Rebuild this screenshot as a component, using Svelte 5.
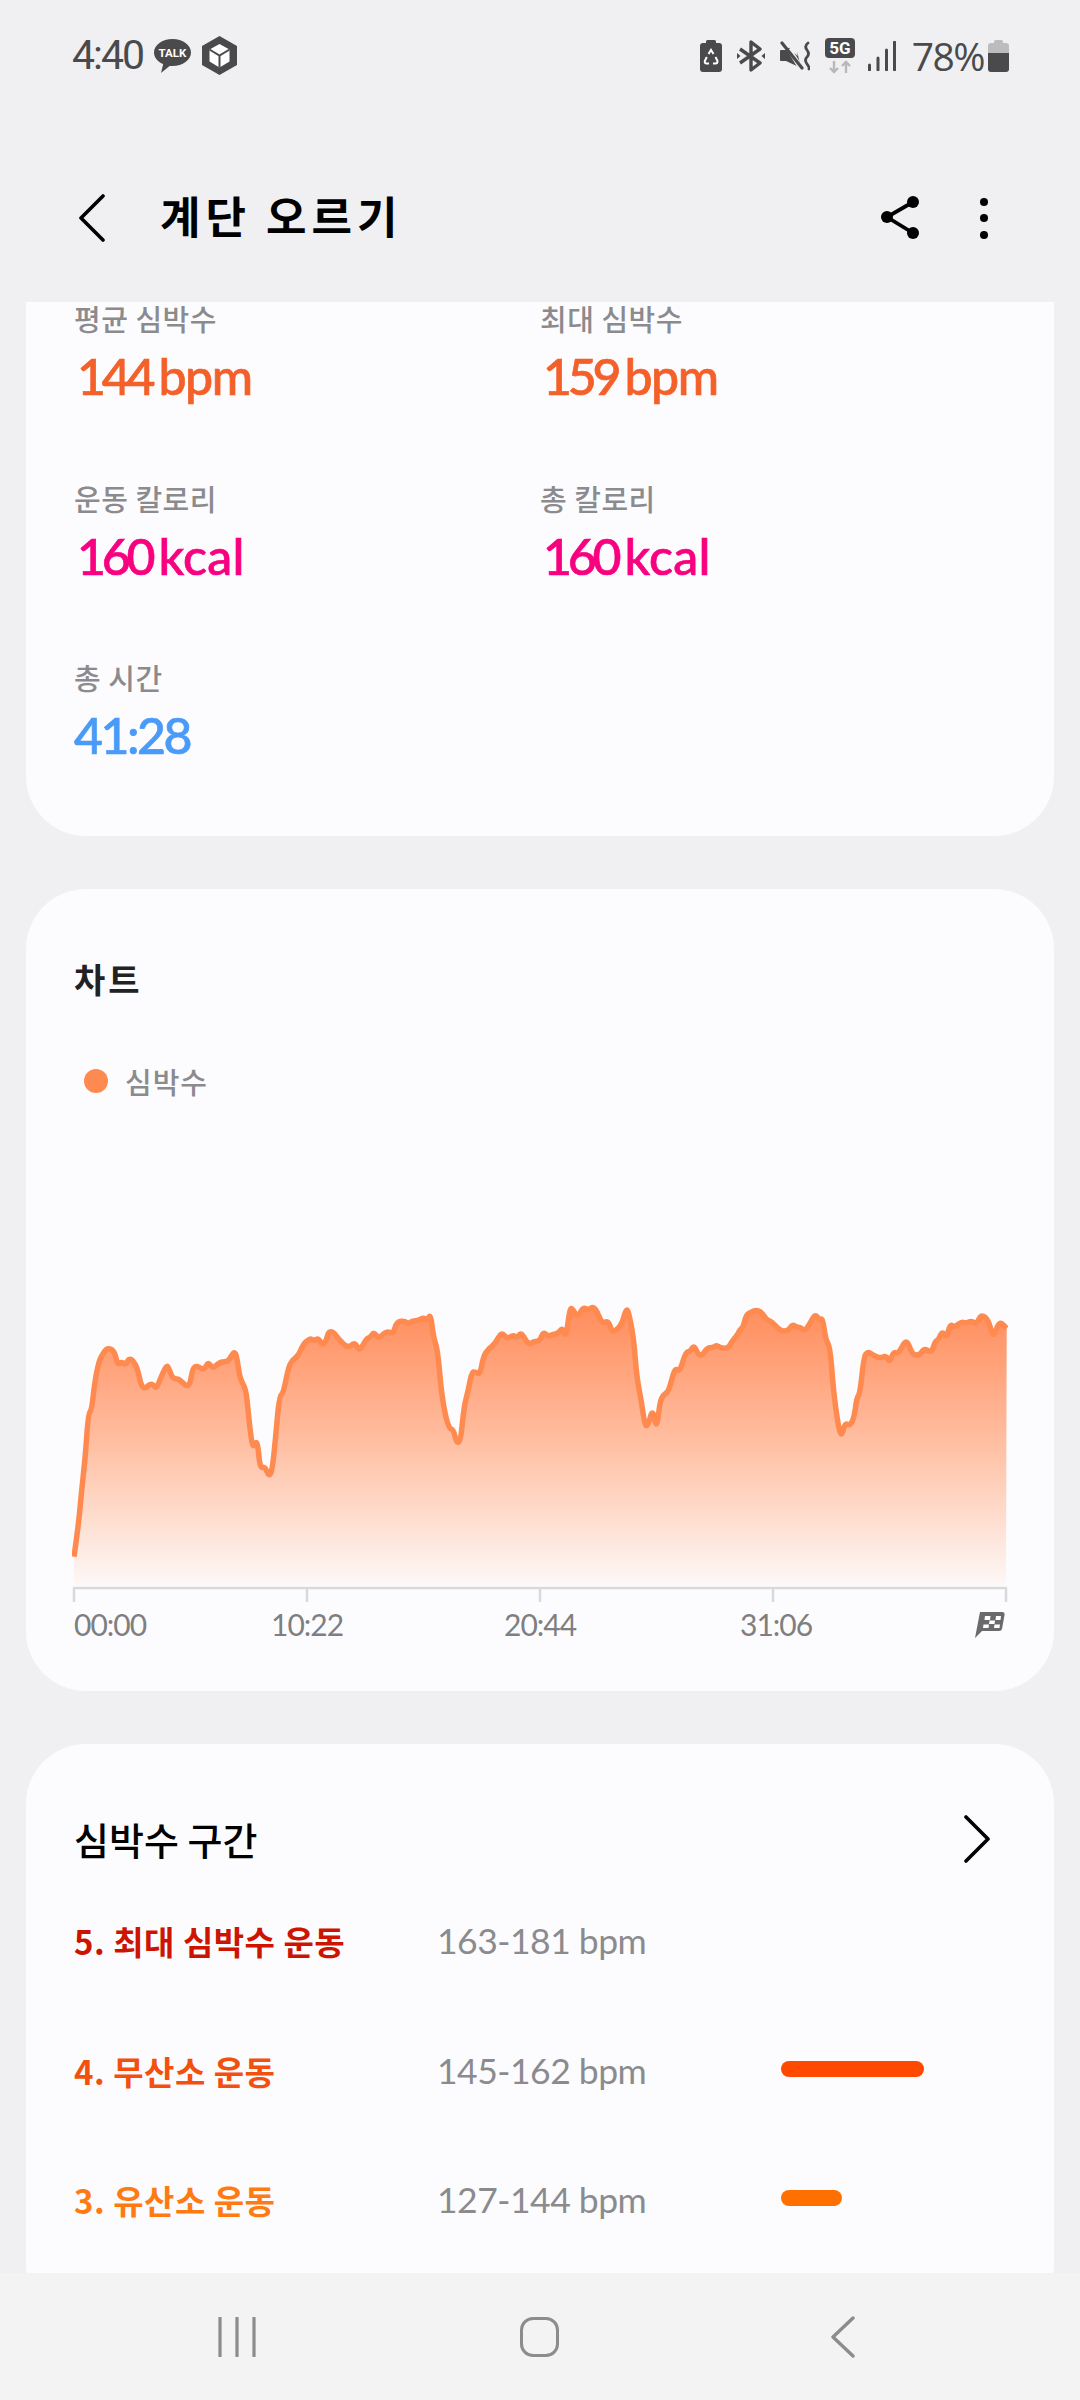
<script>
	const stats = [
		{ label: "평균 심박수", value: "144", unit: "bpm", tone: "heart" },
		{ label: "최대 심박수", value: "159", unit: "bpm", tone: "heart" },
		{ label: "운동 칼로리", value: "160", unit: "kcal", tone: "cal" },
		{ label: "총 칼로리", value: "160", unit: "kcal", tone: "cal" },
		{ label: "총 시간", value: "41:28", unit: "", tone: "time" },
	];

	const zones = [
		{ name: "5. 최대 심박수 운동", range: "163-181 bpm", color: "#cc1400", width: 0 },
		{ name: "4. 무산소 운동", range: "145-162 bpm", color: "#f2500f", width: 143 },
		{ name: "3. 유산소 운동", range: "127-144 bpm", color: "#ff7a12", width: 61 },
	];

	const barColors = ["#cc1400", "#ff4800", "#ff7000"];

	// traced from the recording, in px relative to the chart box
	const left = [102,860,115,770,125,660,135,570,145,430,155,420,165,330,178,270,190,250,200,235,215,237,225,250,233,285,245,275,257,285,267,265,280,272,292,295,303,345,313,357,335,338,348,357,360,330,378,287,385,290,395,320,405,327,417,327,438,348,450,345,458,295,470,287,485,297,495,295,505,275,518,297,540,275,565,275,575,255,585,245,592,270,597,310,605,335,618,360,625,430,635,520,642,530,652,510,660,595,675,590,687,620,697,600,707,500,718,378,730,370,745,295,755,272,775,258,790,222,810,205,822,212,835,205,847,225,858,215,865,185,880,185,895,207,925,235,945,215,958,245,980,205,990,203,1002,185,1015,207,1040,183,1060,192,1070,155,1095,153,1105,162,1118,152,1135,152,1150,143,1162,150,1172,132,1180,200,1193,240,1205,380,1225,475,1240,478,1250,520,1262,512,1272,410,1285,360,1295,307,1305,305,1320,315,1330,260,1345,237,1365,222,1385,185,1400,207,1420,195,1432,205,1443,185,1465,225,1480,215,1500,213];
	const right = [10,185,25,200,40,192,55,190,68,172,78,205,90,112,100,120,112,142,130,112,145,120,160,110,172,125,185,160,205,152,215,183,225,183,245,165,260,110,270,145,282,215,290,320,305,400,315,468,325,465,338,415,350,480,360,395,370,375,385,365,395,330,405,295,420,305,437,245,450,245,462,225,475,255,488,255,500,235,520,232,530,225,545,235,565,235,575,215,590,198,600,180,610,170,618,135,635,125,650,120,665,127,680,150,695,155,722,183,745,183,757,163,770,172,780,172,795,183,810,160,825,132,838,150,848,145,857,210,870,230,880,360,895,470,905,500,915,458,930,468,943,440,950,385,960,370,972,260,983,245,1000,255,1020,265,1038,257,1050,277,1060,245,1075,252,1095,213,1105,220,1118,255,1140,255,1152,235,1175,248,1185,215,1195,210,1207,183,1220,205,1230,162,1243,172,1265,155,1278,160,1295,152,1310,163,1323,132,1345,150,1357,195,1365,190,1378,153,1400,175];

	const points = [];
	for (let i = 0; i < left.length; i += 2) points.push([left[i] / 3 - 32, left[i + 1] / 3 - 10]);
	for (let i = 0; i < right.length; i += 2) points.push([right[i] / 3 + 468, right[i + 1] / 3 - 10]);

	function smooth(pts) {
		let d = `M${pts[0][0].toFixed(1)} ${pts[0][1].toFixed(1)}`;
		for (let i = 1; i < pts.length - 1; i++) {
			const mx = (pts[i][0] + pts[i + 1][0]) / 2;
			const my = (pts[i][1] + pts[i + 1][1]) / 2;
			d += ` Q${pts[i][0].toFixed(1)} ${pts[i][1].toFixed(1)} ${mx.toFixed(1)} ${my.toFixed(1)}`;
		}
		const last = pts[pts.length - 1];
		return d + ` L${last[0].toFixed(1)} ${last[1].toFixed(1)}`;
	}

	const linePath = smooth(points);
	const areaPath = `${linePath} L934 305 L2 305 Z`;
	const ticks = [2, 235, 468, 701, 934];
</script>

<div class="phone">
	<div class="status">
		<div class="status-left">
			<span class="clock">4:40</span>
			<svg class="talk" viewBox="0 0 37 34" width="37" height="34">
				<path d="M18.5 0C8.3 0 0 6 0 13.500C0 18.500 3.700 22.800 9.200 25.100L7 34L15.600 26.900C16.600 27 17.500 27 18.500 27C28.700 27 37 21 37 13.500S28.700 0 18.500 0Z" fill="#4a4a4c" />
				<text x="18.500" y="18" text-anchor="middle" class="talk-text">TALK</text>
			</svg>
			<svg class="cube" viewBox="0 0 35 39" width="35" height="39">
				<path d="M17.500 0L35 10V29L17.500 39L0 29V10Z" fill="#4a4a4c" />
				<path d="M17.500 8L27.500 13.500V25.500L17.500 31.500L7.500 25.500V13.500Z" fill="#fff" />
				<path d="M7.500 13.500L17.500 19.500L27.500 13.500M17.500 19.500V31.500" fill="none" stroke="#4a4a4c" stroke-width="2" />
			</svg>
		</div>
		<div class="status-right">
			<svg viewBox="0 0 22 32" width="22" height="32">
				<path d="M6 3V1.500Q6 0 7.500 0H14.500Q16 0 16 1.500V3H19Q22 3 22 6V29Q22 32 19 32H3Q0 32 0 29V6Q0 3 3 3Z" fill="#4a4a4c" />
				<path d="M8.500 14L11 10L13.500 14M15.500 17L17.500 21Q17.500 23.500 15.500 23.500H13M9 23.500H6.500Q4.500 23.500 4.800 21L6.800 17" fill="none" stroke="#fff" stroke-width="2" />
			</svg>
			<svg viewBox="0 0 28 32" width="28" height="32">
				<path d="M3 9L23 23L14 30V2L23 9L3 23" fill="none" stroke="#4a4a4c" stroke-width="3.400" stroke-linejoin="round" />
				<path d="M0 13L3.500 16L0 19ZM28 13L24.500 16L28 19Z" fill="#4a4a4c" />
			</svg>
			<svg viewBox="0 0 30 30" width="30" height="30">
				<path d="M0 10Q0 9 1 9H6L15 2L21 27L6 20H1Q0 20 0 19Z" fill="#4a4a4c" />
				<path d="M15 2V9L4 -2ZM22 29L9 8" fill="none" stroke="#f0f0f3" stroke-width="5" />
				<path d="M2 2L22 27" stroke="#4a4a4c" stroke-width="3.200" stroke-linecap="round" />
				<path d="M28 2Q24 5 27 9T27 16T27 23T29 28" fill="none" stroke="#4a4a4c" stroke-width="2.800" stroke-linecap="round" />
			</svg>
			<svg class="fiveg" viewBox="0 0 30 36" width="30" height="36">
				<rect width="30" height="20" rx="4" fill="#4a4a4c" />
				<text x="15" y="16" text-anchor="middle" class="fiveg-text">5G</text>
				<path d="M9 23V34M5 30L9 34L13 30" fill="none" stroke="#b8b8ba" stroke-width="2.400" />
				<path d="M21 35V24M17 28L21 24L25 28" fill="none" stroke="#b8b8ba" stroke-width="2.400" />
			</svg>
			<svg class="signal" viewBox="0 0 28 30" width="28" height="30">
				<path d="M1.500 24V29M10 17V29M18.500 9V29M26.500 1V29" fill="none" stroke="#4a4a4c" stroke-width="3" stroke-linecap="round" />
			</svg>
			<span class="percent">78%</span>
			<svg class="battery" viewBox="0 0 21 32" width="21" height="32">
				<path d="M6 3V1.500Q6 0 7.500 0H13.500Q15 0 15 1.500V3H18Q21 3 21 6V13H0V6Q0 3 3 3Z" fill="#bcbcbe" />
				<path d="M0 13H21V29Q21 32 18 32H3Q0 32 0 29Z" fill="#4a4a4c" />
			</svg>
		</div>
	</div>

	<header>
		<svg class="back" viewBox="0 0 26 48" width="26" height="48">
			<path d="M24 2L2 24L24 46" fill="none" stroke="#000" stroke-width="3.600" stroke-linecap="round" stroke-linejoin="round" />
		</svg>
		<h1>계단 오르기</h1>
		<svg class="share" viewBox="0 0 38 44" width="38" height="44">
			<path d="M32 6L6 21L32 37" fill="none" stroke="#000" stroke-width="3.800" />
			<circle cx="32" cy="6" r="6" />
			<circle cx="6" cy="21" r="6" />
			<circle cx="32" cy="37" r="6" />
		</svg>
		<div class="dots"><span></span><span></span><span></span></div>
	</header>

	<main>
		<section class="card stats">
			{#each stats as s}
				<div class="stat">
					<div class="stat-label">{s.label}</div>
					<div class="stat-value {s.tone}"><span class="num">{s.value}</span><span class="unit">{s.unit}</span></div>
				</div>
			{/each}
		</section>

		<section class="card chart-card">
			<h2>차트</h2>
			<div class="legend"><span class="dot"></span>심박수</div>
			<svg class="chart" viewBox="0 0 936 324" width="936" height="324">
				<defs>
					<linearGradient id="area" x1="0" y1="0" x2="0" y2="1">
						<stop offset="0" stop-color="#ff8d5c" />
						<stop offset="0.5" stop-color="#ffc0a4" />
						<stop offset="1" stop-color="#fdf8f7" />
					</linearGradient>
				</defs>
				<path d={areaPath} fill="url(#area)" />
				<path d={linePath} fill="none" stroke="#ff8a50" stroke-width="5.500" stroke-linejoin="round" />
				<path d="M1 308H935" stroke="#d9d9dc" stroke-width="2.500" />
				{#each ticks as t}
					<path d="M{t} 308V322" stroke="#d9d9dc" stroke-width="2.500" />
				{/each}
			</svg>
			<div class="axis">
				<span>00:00</span>
				<span>10:22</span>
				<span>20:44</span>
				<span>31:06</span>
				<svg viewBox="0 0 30 27" width="30" height="27">
					<path d="M5 1H27Q30 1 29.500 4L27 18Q26.500 20 24 20H7L0 27Z" fill="#6a6a6d" />
					<path d="M10 5H15.500L15 9H9.500ZM21 5H26L25.500 9H20.500ZM14.500 9.500H20L19.500 13H14ZM8.500 13.500H14L13.500 17H8ZM19.500 13.500H25L24.500 17H19Z" fill="#fff" />
				</svg>
			</div>
		</section>

		<section class="card zones">
			<div class="zones-head">
				<h2>심박수 구간</h2>
				<svg viewBox="0 0 26 48" width="26" height="48">
					<path d="M2 2L24 24L2 46" fill="none" stroke="#000" stroke-width="3.600" stroke-linecap="round" stroke-linejoin="round" />
				</svg>
			</div>
			{#each zones as z, i}
				<div class="zone">
					<span class="zone-name" style="color: {z.color}">{z.name}</span>
					<span class="zone-range">{z.range}</span>
					{#if z.width}
						<span class="zone-bar" style="width: {z.width}px; background: {barColors[i]}"></span>
					{/if}
				</div>
			{/each}
		</section>
	</main>

	<nav>
		<svg viewBox="0 0 40 40" width="40" height="40">
			<path d="M3 1V39M20 1V39M37 1V39" stroke="#8c8c8e" stroke-width="3.200" stroke-linecap="round" fill="none" />
		</svg>
		<span class="home"></span>
		<svg viewBox="0 0 24 42" width="24" height="42">
			<path d="M22 2L2 21L22 40" fill="none" stroke="#8c8c8e" stroke-width="3.400" stroke-linecap="round" stroke-linejoin="round" />
		</svg>
	</nav>
</div>

<style>
	:global(body) {
		margin: 0;
		background: #f0f0f3;
	}

	.phone {
		width: 1080px;
		height: 2400px;
		display: flex;
		flex-direction: column;
		overflow: hidden;
		font-family: "Noto Sans CJK KR", "Noto Sans", sans-serif;
		background: #f0f0f3;
	}

	.status {
		height: 106px;
		box-sizing: border-box;
		padding: 36px 71px 0 72px;
		display: flex;
		justify-content: space-between;
		align-items: flex-start;
	}

	.status-left,
	.status-right {
		display: flex;
		align-items: center;
		height: 39px;
	}

	.clock {
		font: 400 41px/39px Roboto, sans-serif;
		letter-spacing: -2px;
		color: #4a4a4c;
		width: 82px;
	}

	.talk {
		margin-right: 11px;
	}

	.talk-text {
		font: 700 11.500px Roboto, sans-serif;
		fill: #fff;
	}

	.fiveg-text {
		font: 700 17px Roboto, sans-serif;
		fill: #fff;
	}

	.status-right svg {
		margin-right: 15px;
	}

	.status-right .fiveg {
		margin-right: 13px;
	}

	.status-right .signal {
		margin-right: 16px;
	}

	.status-right .battery {
		margin: 0 0 0 4px;
	}

	.percent {
		font: 400 39px/39px "Open Sans", sans-serif;
		letter-spacing: -1.500px;
		color: #4a4a4c;
	}

	header {
		height: 196px;
		box-sizing: border-box;
		padding: 28px 92px 0 79px;
		display: flex;
		align-items: center;
	}

	header h1 {
		margin: 0 0 6px 55px;
		flex: 1;
		font-size: 44px;
		font-weight: 600;
		letter-spacing: 5px;
		line-height: 60px;
		color: #000;
	}

	.share {
		margin-right: 61px;
	}

	.dots {
		display: flex;
		flex-direction: column;
		gap: 8.500px;
	}

	.dots span {
		width: 8px;
		height: 8px;
		border-radius: 50%;
		background: #000;
	}

	main {
		flex: 1;
		min-height: 0;
		overflow: hidden;
		padding: 0 26px;
		display: flex;
		flex-direction: column;
		gap: 53px;
	}

	.card {
		flex: none;
		background: #fcfcfe;
		border-radius: 60px;
		box-sizing: border-box;
		padding-left: 48px;
		padding-right: 48px;
	}

	.stats {
		margin-top: -4px;
		border-radius: 0 0 60px 60px;
		padding-bottom: 71px;
		display: grid;
		grid-template-columns: 466px 1fr;
		row-gap: 71.500px;
	}

	.stat-label {
		font-size: 29px;
		line-height: 40px;
		font-weight: 500;
		letter-spacing: 0.500px;
		color: #8b8b8e;
	}

	.stat-value {
		margin: 8px 0 0 3px;
		font: 500 50px/60px Lato, sans-serif;
		-webkit-text-stroke: 0.7px currentColor;
	}

	.num {
		letter-spacing: -4.200px;
	}

	.unit {
		margin-left: 7px;
		letter-spacing: -1.500px;
	}

	.heart {
		color: #f4602a;
	}

	.cal {
		color: #f80080;
	}

	.cal .unit {
		letter-spacing: 0.300px;
	}

	.time {
		margin-left: 0;
		color: #4a9bf8;
	}

	.time .num {
		letter-spacing: -2.500px;
	}

	h2 {
		margin: 0;
		font-weight: 700;
	}

	.chart-card {
		padding-top: 70px;
		padding-bottom: 47px;
		padding-right: 0;
	}

	.chart-card h2 {
		font-size: 34px;
		line-height: 40px;
		letter-spacing: 3px;
		color: #222224;
	}

	.legend {
		margin-top: 62px;
		padding-left: 10px;
		display: flex;
		align-items: center;
		font-size: 29px;
		line-height: 40px;
		font-weight: 500;
		letter-spacing: 1px;
		color: #8b8b8e;
	}

	.dot {
		width: 24px;
		height: 24px;
		border-radius: 50%;
		background: #ff8a50;
		margin-right: 17px;
	}

	.chart {
		display: block;
		margin: 179px 0 0 -2px;
	}

	.axis {
		display: grid;
		grid-template-columns: 197px 233px 236px 235px auto;
		height: 40px;
		align-items: center;
		font: 400 30px/40px Lato, sans-serif;
		letter-spacing: -1px;
		color: #7f7f82;
	}

	.axis svg {
		display: block;
	}

	.zones {
		padding-top: 70px;
		padding-bottom: 60px;
	}

	.zones-head {
		height: 62.250px;
		display: flex;
		justify-content: space-between;
		align-items: flex-start;
		padding-right: 16px;
	}

	.zones-head h2 {
		font-size: 38px;
		line-height: 50px;
		font-weight: 500;
		color: #000;
	}

	.zones-head svg {
		margin-top: 1px;
	}

	.zone {
		height: 129.500px;
		display: grid;
		grid-template-columns: 363px 344px 1fr;
		align-items: center;
	}

	.zone-name {
		font-size: 33px;
		font-weight: 600;
		letter-spacing: 0.500px;
		white-space: nowrap;
	}

	.zone-range {
		font: 400 35.500px/40px Lato, sans-serif;
		letter-spacing: -0.500px;
		color: #8b8b8e;
	}

	.zone-bar {
		display: block;
		height: 16px;
		border-radius: 8px;
		margin-top: -4px;
	}

	nav {
		height: 127px;
		flex: none;
		background: #f3f3f4;
		box-sizing: border-box;
		padding-left: 217px;
		display: flex;
		align-items: center;
	}

	.home {
		width: 39px;
		height: 40px;
		box-sizing: border-box;
		border: 3.400px solid #8c8c8e;
		border-radius: 13px;
		margin: 0 272px 0 263px;
	}
</style>
